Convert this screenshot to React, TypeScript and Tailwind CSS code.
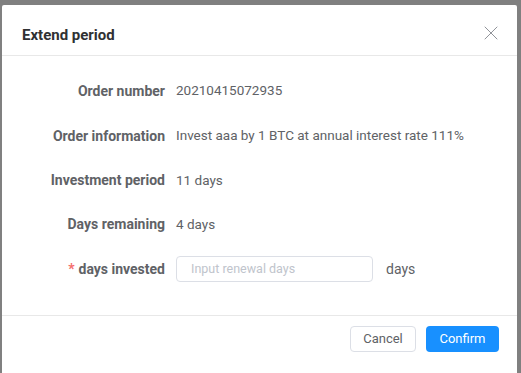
import { X } from 'lucide-react'

const rows = [
  { label: 'Order number', value: '20210415072935', h: 'h-[45px]' },
  { label: 'Order information', value: 'Invest aaa by 1 BTC at annual interest rate 111%', h: 'h-[45px]' },
  { label: 'Investment period', value: '11 days', h: 'h-[44px]' },
  { label: 'Days remaining', value: '4 days', h: 'h-[44px]' },
]

export default function App() {
  return (
    <div className="h-[373px] w-[521px] overflow-hidden bg-[#808080] pl-[2px] pt-[5px] font-['Roboto',sans-serif]">
      <div className="flex h-[380px] w-[515px] flex-col rounded-[2px] bg-white">
        <div className="flex h-[51px] items-start justify-between border-b border-[#e8e8e8] pl-5 pr-[14px] pt-[18px]">
          <h2 className="text-[15px] font-bold leading-6 text-[#303133]">Extend period</h2>
          <button className="mt-[-2px] text-[#909399]">
            <X size={24} strokeWidth={1} />
          </button>
        </div>

        <div className="pb-6 pt-[12px] text-[13.5px] text-[#606266]">
          {rows.map((row) => (
            <div key={row.label} className={`flex items-center ${row.h}`}>
              <span className="w-[174px] pr-[11px] text-right text-sm font-bold">{row.label}</span>
              <span>{row.value}</span>
            </div>
          ))}
          <div className="flex h-[45px] items-center">
            <span className="w-[174px] pr-[11px] text-right text-sm font-bold">
              <span className="mr-1 text-[#f56c6c]">*</span>days invested
            </span>
            <input
              placeholder="Input renewal days"
              className="h-[26px] w-[197px] rounded-[4px] border border-[#dcdfe6] px-[14px] text-[12.5px] outline-none placeholder:text-[#c0c4cc]"
            />
            <span className="ml-[13px] text-sm">days</span>
          </div>
        </div>

        <div className="flex justify-end gap-[10px] border-t border-[#e8e8e8] pr-[18px] pt-[10px]">
          <button className="h-[26px] w-[66px] rounded-[4px] border border-[#dcdfe6] bg-white text-[13px] text-[#606266]">
            Cancel
          </button>
          <button className="h-[26px] w-[73px] rounded-[4px] bg-[#1890ff] text-[13px] text-white">
            Confirm
          </button>
        </div>
      </div>
    </div>
  )
}
